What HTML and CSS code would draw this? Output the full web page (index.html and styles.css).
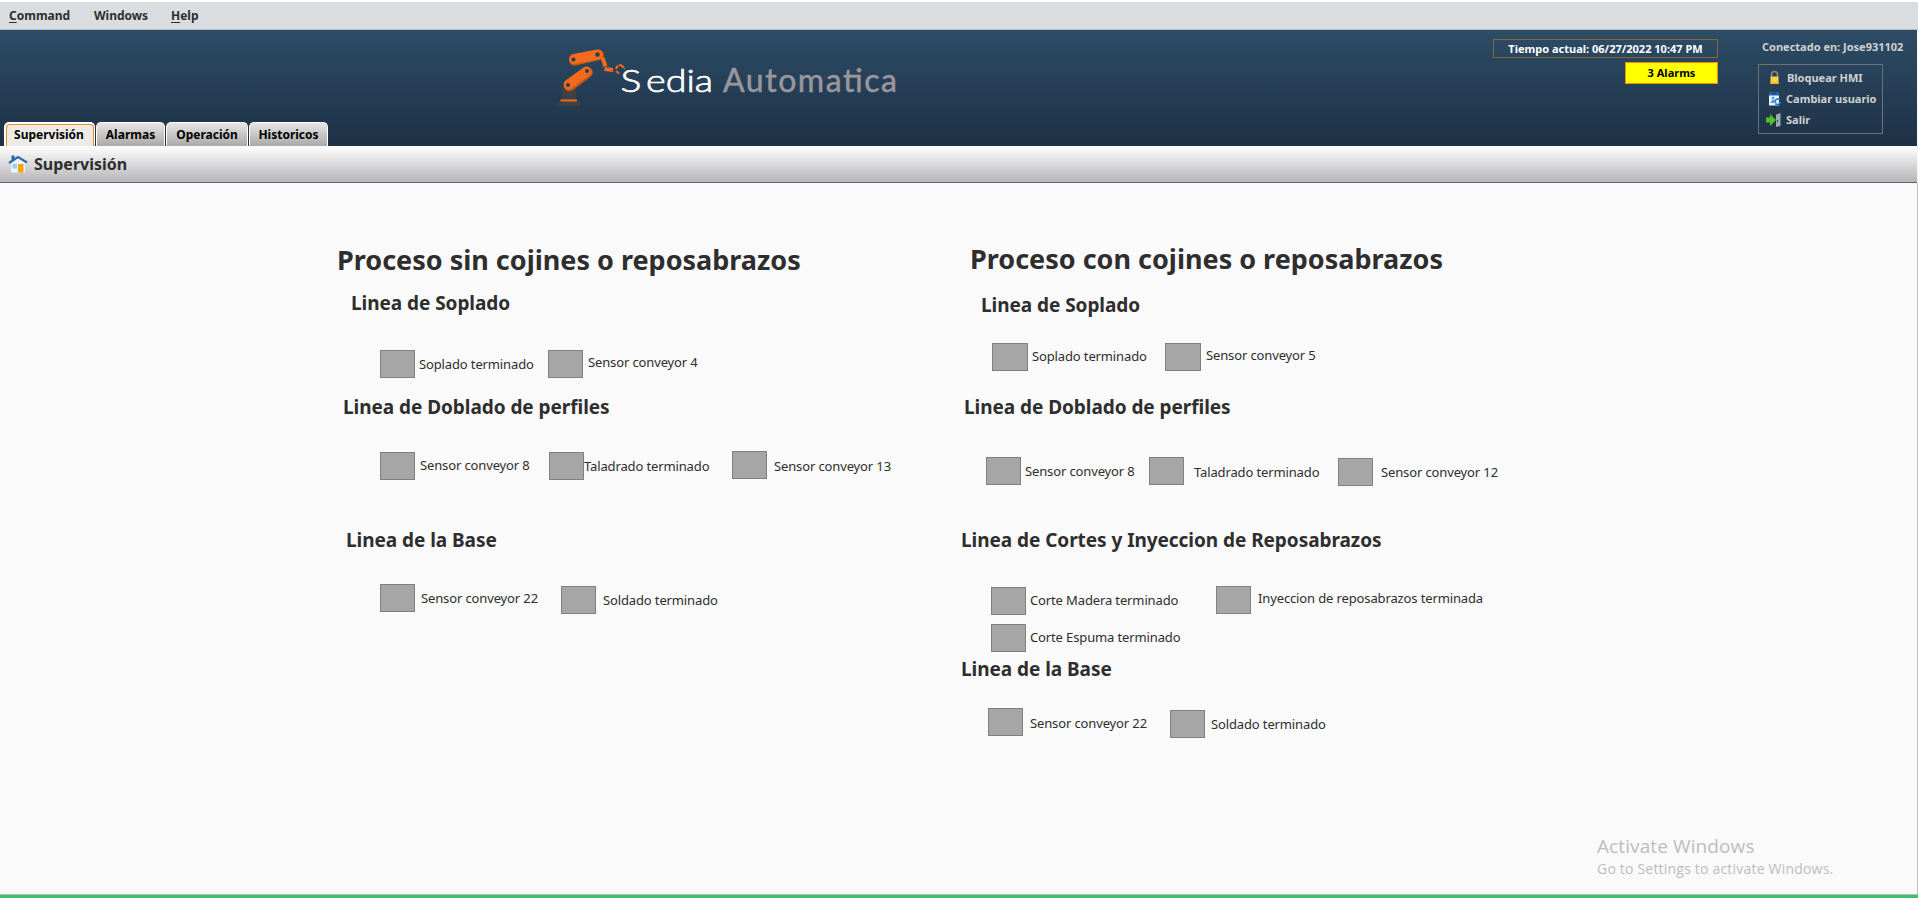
FILE: index.html
```html
<!DOCTYPE html>
<html lang="es">
<head>
<meta charset="utf-8">
<title>Supervisión</title>
<link rel="stylesheet" href="styles.css">
</head>
<body>
<div class="app">
  <nav class="menubar">
    <span class="menu-command"><u>C</u>ommand</span>
    <span class="menu-windows">Windows</span>
    <span class="menu-help"><u>H</u>elp</span>
  </nav>

  <header class="header">
    <div class="tabs">
      <div class="tab tab-active"><span>Supervisión</span></div>
      <div class="tab tab-alarms">Alarmas</div>
      <div class="tab tab-operation">Operación</div>
      <div class="tab tab-history">Historicos</div>
    </div>

    <svg class="logo" width="350" height="70" viewBox="550 40 350 70">
      <path d="M562 87h14v14h-14z" fill="#3f4245"/>
      <path d="M558 102h22v4h-22z" fill="#3f4245"/>
      <path d="M560.500 100.500h16.500" stroke="#f26a1b" stroke-width="2"/>
      <circle cx="602" cy="53.500" r="3.500" fill="#3f4245"/>
      <path d="M569.500 86l18-13.500" stroke="#c4551f" stroke-width="10.500" stroke-linecap="round"/>
      <path d="M568.500 84.500l18-13" stroke="#f26a1b" stroke-width="10" stroke-linecap="round"/>
      <path d="M574.500 60.500l24-5.500" stroke="#c4551f" stroke-width="10.500" stroke-linecap="round"/>
      <path d="M574 59l24-4.500" stroke="#f26a1b" stroke-width="10" stroke-linecap="round"/>
      <g fill="#2b3c4c"><circle cx="568" cy="85" r="2"/><circle cx="587" cy="71" r="2"/><circle cx="573.500" cy="59.500" r="2"/><circle cx="597.500" cy="54.500" r="2.200"/></g>
      <path d="M602.500 57.500l3 9" stroke="#f26a1b" stroke-width="4"/>
      <path d="M604.500 69l8.500 1" stroke="#f26a1b" stroke-width="4"/>
      <path d="M616 69q1-4 5-4M616 71l3 2.500M621 65l4 4" stroke="#f26a1b" stroke-width="2" fill="none" stroke-dasharray="4 1"/>
      <text class="logo-first" y="92"><tspan x="620.500" textLength="21" lengthAdjust="spacingAndGlyphs">S</tspan><tspan x="646" textLength="67" lengthAdjust="spacingAndGlyphs">edia</tspan></text>
      <text x="723" y="92" class="logo-second" textLength="174">Automatica</text>
    </svg>

    <div class="status">
      <div class="clock">Tiempo actual: 06/27/2022 10:47 PM</div>
      <div class="alarms">3 Alarms</div>
    </div>

    <div class="session">
      <div class="user">Conectado en: Jose931102</div>
      <div class="actions">
        <div class="action">
          <svg width="16" height="16" viewBox="0 0 16 16"><path d="M5.500 7V4.500a3 3 0 0 1 6 0V7" fill="none" stroke="#8d8a80" stroke-width="1.500"/><path d="M4.500 6.500h8V14h-8z" fill="#fcd34b"/><path d="M4.500 12h8v2h-8z" fill="#f5b82e"/></svg>
          <span class="lock-text">Bloquear HMI</span>
        </div>
        <div class="action">
          <svg width="16" height="16" viewBox="0 0 16 16"><path d="M3 1h10v13.500H3z" fill="#eef4fb"/><path d="M3 1h10v3.500H3z" fill="#1e66a8"/><path d="M6.500 2.500h3" stroke="#12385c"/><circle cx="7" cy="7" r="1.500" fill="#5b9be0"/><path d="M4.500 12c0-4 6-4 6 0z" fill="#5b9be0"/><path d="M9 10.500a2.800 2.800 0 0 1 5-1.500M14.300 11a2.800 2.800 0 0 1-5 1.500" fill="none" stroke="#2277dd" stroke-width="1.600"/></svg>
          <span>Cambiar usuario</span>
        </div>
        <div class="action">
          <svg width="16" height="16" viewBox="0 0 16 16"><path d="M7 1h7.500v13H7z" fill="#27343d"/><path d="M10 2.500l4.500-1.500v13l-4.500 1z" fill="#9aabb5"/><path d="M11.500 8v2" stroke="#27343d"/><path d="M0 5.500h4V2l6 6-6 6v-3.500H0z" fill="#4fc12b"/></svg>
          <span>Salir</span>
        </div>
      </div>
    </div>
  </header>

  <div class="titlebar">
    <svg width="20" height="20" viewBox="0 0 20 20"><path d="M3.500 1.500h3v5h-3z" fill="#2d62a0"/><path d="M3 9l7-6 7 6v9.500H3z" fill="#eef2fb"/><path d="M1 9l9-6 9 5.500" fill="none" stroke="#2f6bab" stroke-width="2.200"/><path d="M4.500 10h4.500v4.500H4.500z" fill="#8fd3f7"/><path d="M10 10h5.500v8.500H10z" fill="#f5a50a"/></svg>
    <h1>Supervisión</h1>
  </div>

  <main class="content">
    <section class="process process-plain">
      <h2>Proceso sin cojines o reposabrazos</h2>
      <h3 class="p-blow">Linea de Soplado</h3>
      <div class="row p-blow-row"><i class="lamp"></i><span class="d4">Soplado terminado</span><i class="lamp"></i><span class="d2">Sensor conveyor 4</span></div>
      <h3 class="p-bend">Linea de Doblado de perfiles</h3>
      <div class="row p-bend-row"><i class="lamp d1"></i><span class="d4">Sensor conveyor 8</span><i class="lamp d1"></i><span class="d5">Taladrado terminado</span><i class="lamp"></i><span class="d5">Sensor conveyor 13</span></div>
      <h3 class="p-base">Linea de la Base</h3>
      <div class="row p-base-row"><i class="lamp"></i><span class="d4">Sensor conveyor 22</span><i class="lamp d2"></i><span class="d6">Soldado terminado</span></div>
    </section>

    <section class="process process-cushion">
      <h2>Proceso con cojines o reposabrazos</h2>
      <h3 class="c-blow">Linea de Soplado</h3>
      <div class="row c-blow-row"><i class="lamp"></i><span class="d3">Soplado terminado</span><i class="lamp"></i><span class="d2">Sensor conveyor 5</span></div>
      <h3 class="c-bend">Linea de Doblado de perfiles</h3>
      <div class="row c-bend-row"><i class="lamp"></i><span class="d4">Sensor conveyor 8</span><i class="lamp"></i><span class="d5">Taladrado terminado</span><i class="lamp d1"></i><span class="d5">Sensor conveyor 12</span></div>
      <h3 class="c-cut">Linea de Cortes y Inyeccion de Reposabrazos</h3>
      <div class="row c-cut-row"><i class="lamp d1"></i><span class="d4">Corte Madera terminado</span><i class="lamp"></i><span class="d2">Inyeccion de reposabrazos terminada</span></div>
      <div class="row c-foam-row"><i class="lamp"></i><span class="d3">Corte Espuma terminado</span></div>
      <h3 class="c-base">Linea de la Base</h3>
      <div class="row c-base-row"><i class="lamp"></i><span class="d5">Sensor conveyor 22</span><i class="lamp d2"></i><span class="d6">Soldado terminado</span></div>
    </section>

    <aside class="watermark">
      <div class="wm-title">Activate Windows</div>
      <div class="wm-text">Go to Settings to activate Windows.</div>
    </aside>
  </main>
</div>
</body>
</html>
```

FILE: styles.css
```css
* { box-sizing: border-box; }
body { margin: 0; background: #fafafa; color: #2e2e2e; font-family: "Noto Sans", sans-serif; font-size: 13px; white-space: nowrap; overflow: hidden; }
svg { display: block; flex: none; }
h1, h2, h3 { margin: 0; font-weight: 700; }

.app { display: flex; flex-direction: column; height: 898px; border-bottom: 3px solid #3cbf6c; }

.menubar { display: flex; height: 30px; padding-left: 9px; border-top: 2px solid #fff; border-bottom: 1px solid #b4bcc2; background: #d9dde0; font-size: 12px; font-weight: 700; line-height: 27px; }
.menubar u { text-underline-offset: 2px; }
.menu-command { width: 85px; }
.menu-windows { width: 77px; }

.header { display: flex; height: 116px; margin-right: 1px; background: linear-gradient(#2d4c66, #1e3146); }
.tabs { display: flex; align-items: flex-end; gap: 1px; width: 550px; padding-left: 4px; }
.tab { height: 24px; border: 1px solid #fff; border-bottom: 0; border-radius: 5px 5px 0 0; background: linear-gradient(#e8e6e4, #a9a9a9); color: #000; font-size: 12px; font-weight: 700; line-height: 24px; text-align: center; }
.tab-active { width: 91px; padding: 0 0 0 1px; background: #fff; }
.tab-active span { display: block; height: 22px; margin-top: 1px; padding-right: 2px; border: 1px solid #f08a1c; border-bottom: 0; border-radius: 4px 4px 0 0; background: #edebe7; line-height: 20px; }
.tab-alarms { width: 69px; }
.tab-operation { width: 82px; }
.tab-history { width: 79px; }

.logo { margin-top: 10px; }
.logo-first { fill: #fff; stroke: #fff; stroke-width: 0.7px; font: 300 32px Lato, sans-serif; }
.logo-second { fill: #99979c; stroke: #99979c; stroke-width: 0.5px; font: 400 32px Lato, sans-serif; }

.status { display: flex; flex-direction: column; align-items: flex-end; gap: 4px; width: 818px; padding-top: 9px; color: #fff; font-size: 11px; font-weight: 700; text-align: center; }
.clock { width: 225px; height: 19px; border: 1px solid #87653f; line-height: 17px; }
.alarms { width: 93px; height: 22px; border: 1px solid #f08a1c; background: #ff0; color: #000; line-height: 20px; }

.session { padding: 9px 0 0 40px; color: #d0d0d0; font-size: 11px; font-weight: 700; }
.user { height: 16px; padding-left: 4px; line-height: 16px; }
.actions { width: 125px; height: 70px; margin-top: 9px; padding: 2px 0 0 7px; border: 1px solid #6b7178; }
.action { display: flex; align-items: center; gap: 4px; height: 21px; }
.lock-text { margin-left: 1px; }

.titlebar { display: flex; align-items: center; gap: 6px; height: 37px; margin-right: 1px; padding-left: 8px; border-bottom: 1px solid #666672; background: linear-gradient(#fff, #b6b6ba); }
.titlebar h1 { font-size: 16px; }

.content { display: flex; flex: 1; border-right: 1px solid #c2c2c2; border-bottom: 1px solid #b9bfbb; }
.process h2 { height: 38px; font-size: 27px; line-height: 40px; }
.process h3 { height: 28px; font-size: 19px; letter-spacing: -0.05px; line-height: 30px; }
.row { display: grid; align-items: start; height: 32px; letter-spacing: -0.13px; line-height: 20px; }
.lamp { width: 35px; height: 28px; border: 1px solid #808080; background: #a6a6a6; }
.d1 { margin-top: 1px; }
.d2 { margin-top: 2px; }
.d3 { margin-top: 3px; }
.d4 { margin-top: 4px; }
.d5 { margin-top: 5px; }
.d6 { margin-top: 6px; }

.process-plain { width: 624px; padding: 57px 0 0 337px; }
.p-blow { margin: 10px 0 0 14px; }
.p-blow-row { grid-template-columns: 39px 129px 40px 130px; margin: 34px 0 0 43px; }
.p-bend { margin: 10px 0 0 6px; }
.p-bend-row { grid-template-columns: 40px 129px 35px 148px 42px 130px; margin: 31px 0 0 43px; }
.p-base { margin: 42px 0 0 9px; }
.p-base-row { grid-template-columns: 41px 140px 42px 130px; margin: 31px 0 0 43px; }

.process-cushion { width: 636px; padding: 56px 0 0 337px; }
.process-cushion h2 { margin-left: 9px; }
.c-blow { margin: 13px 0 0 20px; }
.c-blow-row { grid-template-columns: 40px 133px 41px 130px; margin: 25px 0 0 31px; }
.c-blow-row .lamp { width: 36px; }
.c-bend { margin: 17px 0 0 3px; }
.c-bend-row { grid-template-columns: 39px 124px 45px 144px 43px 130px; margin: 37px 0 0 25px; }
.c-cut { margin: 36px 0 0 0; }
.c-cut-row { grid-template-columns: 39px 186px 42px 240px; height: 30px; margin: 33px 0 0 30px; }
.c-foam-row { grid-template-columns: 39px 187px; height: 30px; margin: 8px 0 0 30px; }
.c-base { margin: 0; }
.c-base-row { grid-template-columns: 42px 140px 41px 130px; margin: 26px 0 0 27px; }

.watermark { align-self: flex-end; padding: 0 0 15px 337px; color: #bdbdbd; font-family: "Open Sans", sans-serif; }
.wm-title { font-size: 19px; letter-spacing: 0.1px; line-height: 26px; }
.wm-text { font-size: 14px; letter-spacing: 0.2px; line-height: 20px; }
```
